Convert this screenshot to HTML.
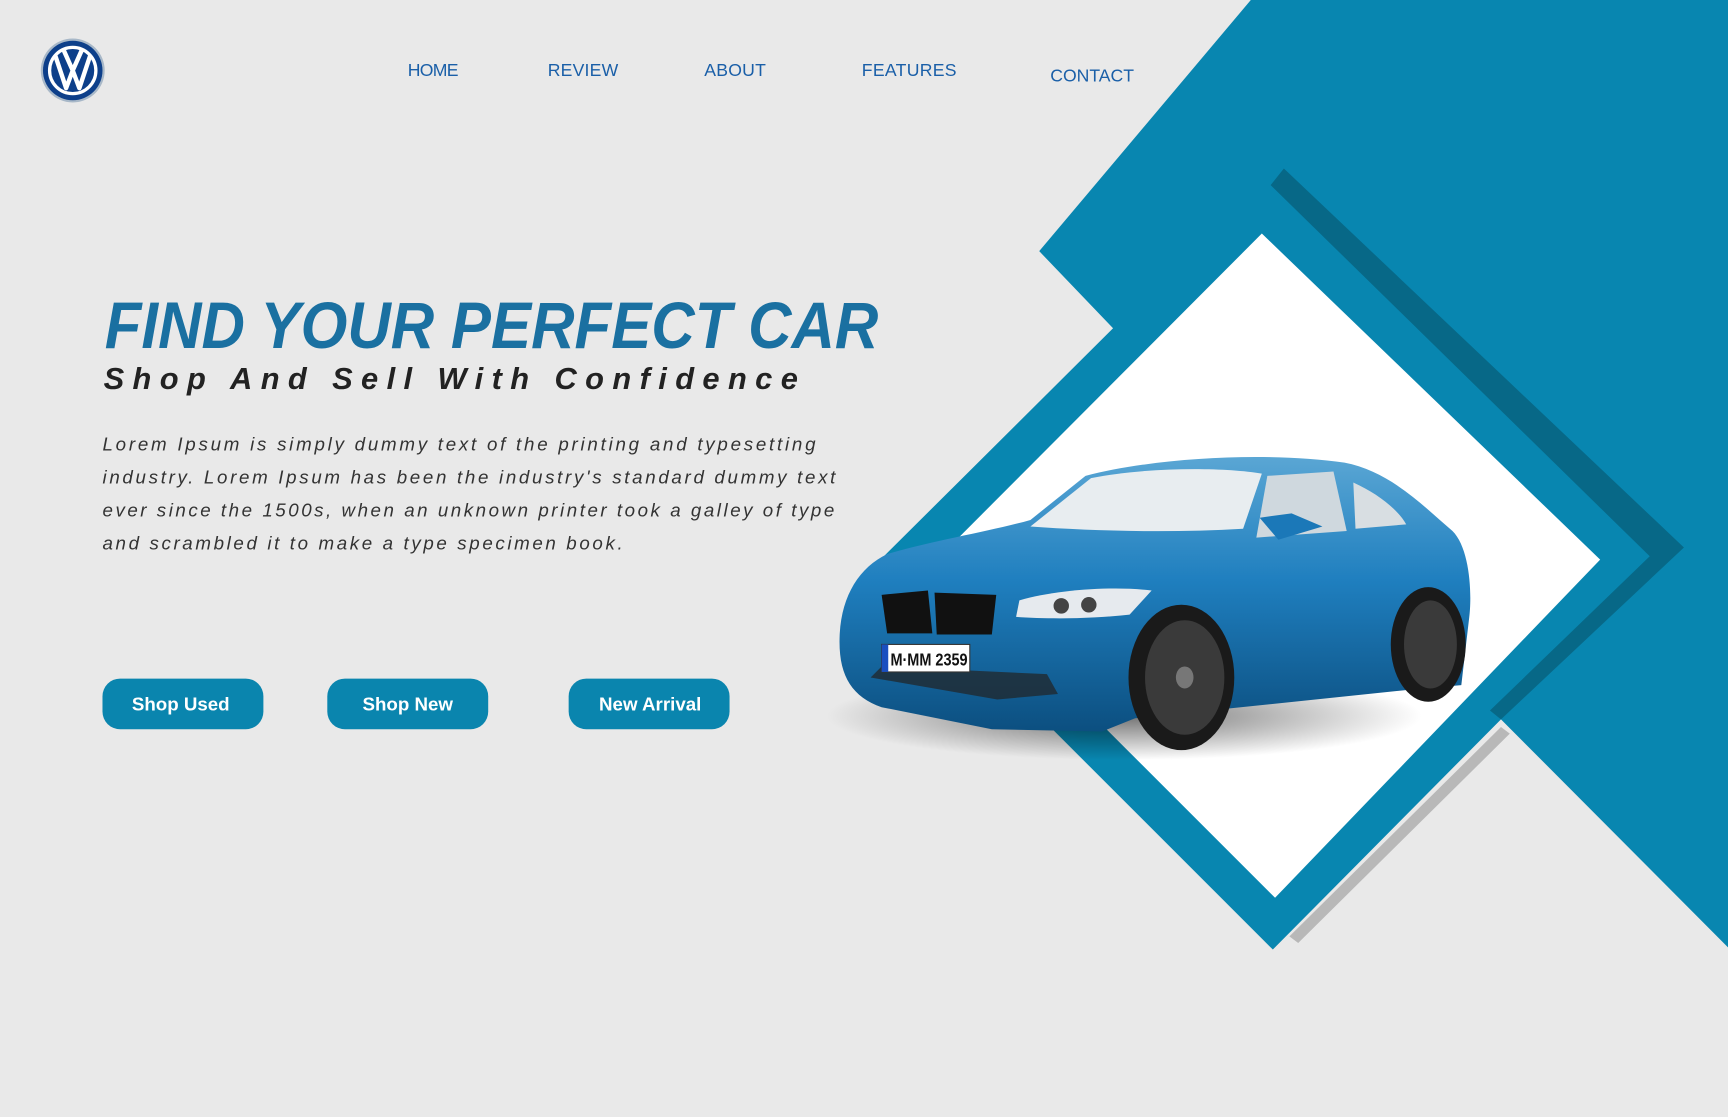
<!DOCTYPE html>
<html><head><meta charset="utf-8"><style>
html,body{margin:0;padding:0;background:#e9e9e9;overflow:hidden}
svg{display:block}
text{font-family:"Liberation Sans",sans-serif}
</style></head><body>
<svg width="1728" height="1117" viewBox="0 0 1568 1014" preserveAspectRatio="none" xmlns="http://www.w3.org/2000/svg">
<defs>
<linearGradient id="bd" x1="0" y1="0" x2="0" y2="1"><stop offset="0" stop-color="#5aa6d4"/><stop offset="0.45" stop-color="#1f7fbf"/><stop offset="1" stop-color="#0c4f80"/></linearGradient>
<radialGradient id="sh" cx="0.5" cy="0.5" r="0.5"><stop offset="0" stop-color="#000" stop-opacity="0.55"/><stop offset="1" stop-color="#000" stop-opacity="0"/></radialGradient>
</defs>
<rect width="1568" height="1014" fill="#e9e9e9"/>
<polygon points="1362,660 1370,666 1178,856 1170,850" fill="#b8b8b8"/>
<polygon points="1135,0 1568,0 1568,860 1362,653 1155,862 800,507 1010,298 943,228" fill="#0886b0"/>
<polygon points="1165,153 1528,497 1362,653 1352,645 1497,505 1153,168" fill="#076887"/>
<polygon points="1145,212 1452,508 1157,815 850,508" fill="#ffffff"/>

<!-- car -->
<ellipse cx="1020" cy="650" rx="270" ry="40" fill="url(#sh)"/>
<path d="M762,575 C764,540 780,515 805,503 C850,490 900,482 935,472 L985,432 C1050,415 1150,410 1220,420 C1262,428 1292,460 1318,482 C1334,498 1336,540 1333,562 L1326,622 L1280,626 L1030,652 L1000,664 L900,662 L800,642 C772,632 760,612 762,575Z" fill="url(#bd)"/>
<path d="M935,478 L990,434 C1040,424 1110,424 1145,430 L1128,480 C1060,484 990,482 935,478Z" fill="#e8edf0"/>
<path d="M1150,432 L1210,428 L1222,482 L1140,488Z" fill="#cfd8de"/>
<path d="M1228,438 C1250,448 1268,462 1276,476 L1230,480Z" fill="#d8dee2"/>
<path d="M1143,470 L1172,466 L1200,478 L1160,490Z" fill="#1b78b8"/>
<path d="M800,540 L842,536 L846,575 L805,575Z" fill="#111"/>
<path d="M848,538 L904,540 L900,576 L850,576Z" fill="#111"/>
<path d="M925,545 C960,535 1010,532 1045,536 L1025,558 C990,562 950,562 922,560Z" fill="#e6eaee"/>
<circle cx="963" cy="550" r="7" fill="#444"/><circle cx="988" cy="549" r="7" fill="#444"/>
<path d="M790,615 L905,635 L960,630 L950,612 L800,605Z" fill="#222" opacity="0.7"/>
<rect x="800" y="585" width="80" height="25" fill="#fff" stroke="#333"/>
<rect x="800" y="585" width="6" height="25" fill="#1a4fc0"/>
<text x="808" y="604" font-size="16" fill="#111" font-weight="bold" textLength="70" lengthAdjust="spacingAndGlyphs">M·MM 2359</text>
<ellipse cx="1072" cy="615" rx="48" ry="66" fill="#1a1a1a"/>
<ellipse cx="1075" cy="615" rx="36" ry="52" fill="#3a3a3a"/>
<ellipse cx="1075" cy="615" rx="8" ry="10" fill="#777"/>
<ellipse cx="1296" cy="585" rx="34" ry="52" fill="#1a1a1a"/>
<ellipse cx="1298" cy="585" rx="24" ry="40" fill="#3a3a3a"/>

<!-- VW logo -->
<circle cx="66" cy="64" r="29" fill="#a8b8c8"/>
<circle cx="66" cy="64" r="27" fill="#0d3f8a"/>
<circle cx="66" cy="64" r="21" fill="none" stroke="#fff" stroke-width="3"/>
<path d="M50,50 L60,80 L66,64 L72,80 L82,50 M58,46 L66,64 L74,46" fill="none" stroke="#fff" stroke-width="4" stroke-linejoin="round"/>

<g font-size="16" fill="#1a5fa8">
<text x="370" y="69" textLength="46">HOME</text>
<text x="497" y="69" textLength="64">REVIEW</text>
<text x="639" y="69" textLength="56">ABOUT</text>
<text x="782" y="69" textLength="86">FEATURES</text>
<text x="953" y="74" textLength="76">CONTACT</text>
</g>

<text x="95" y="316" font-size="60" font-weight="bold" font-style="italic" fill="#1a70a1" textLength="702" lengthAdjust="spacingAndGlyphs">FIND YOUR PERFECT CAR</text>
<text x="94" y="353" font-size="28" font-weight="bold" font-style="italic" fill="#222" textLength="630">Shop And Sell With Confidence</text>

<g font-size="17" font-style="italic" fill="#333">
<text x="93" y="409" textLength="647">Lorem Ipsum is simply dummy text of the printing and typesetting</text>
<text x="93" y="439" textLength="665">industry. Lorem Ipsum has been the industry's standard dummy text</text>
<text x="93" y="469" textLength="664">ever since the 1500s, when an unknown printer took a galley of type</text>
<text x="93" y="499" textLength="472">and scrambled it to make a type specimen book.</text>
</g>

<g fill="#0a85ae">
<rect x="93" y="616" width="146" height="46" rx="16"/>
<rect x="297" y="616" width="146" height="46" rx="16"/>
<rect x="516" y="616" width="146" height="46" rx="16"/>
</g>
<g font-size="17" fill="#fff" font-weight="bold" text-anchor="middle">
<text x="164" y="645">Shop Used</text>
<text x="370" y="645">Shop New</text>
<text x="590" y="645">New Arrival</text>
</g>
</svg>
</body></html>
